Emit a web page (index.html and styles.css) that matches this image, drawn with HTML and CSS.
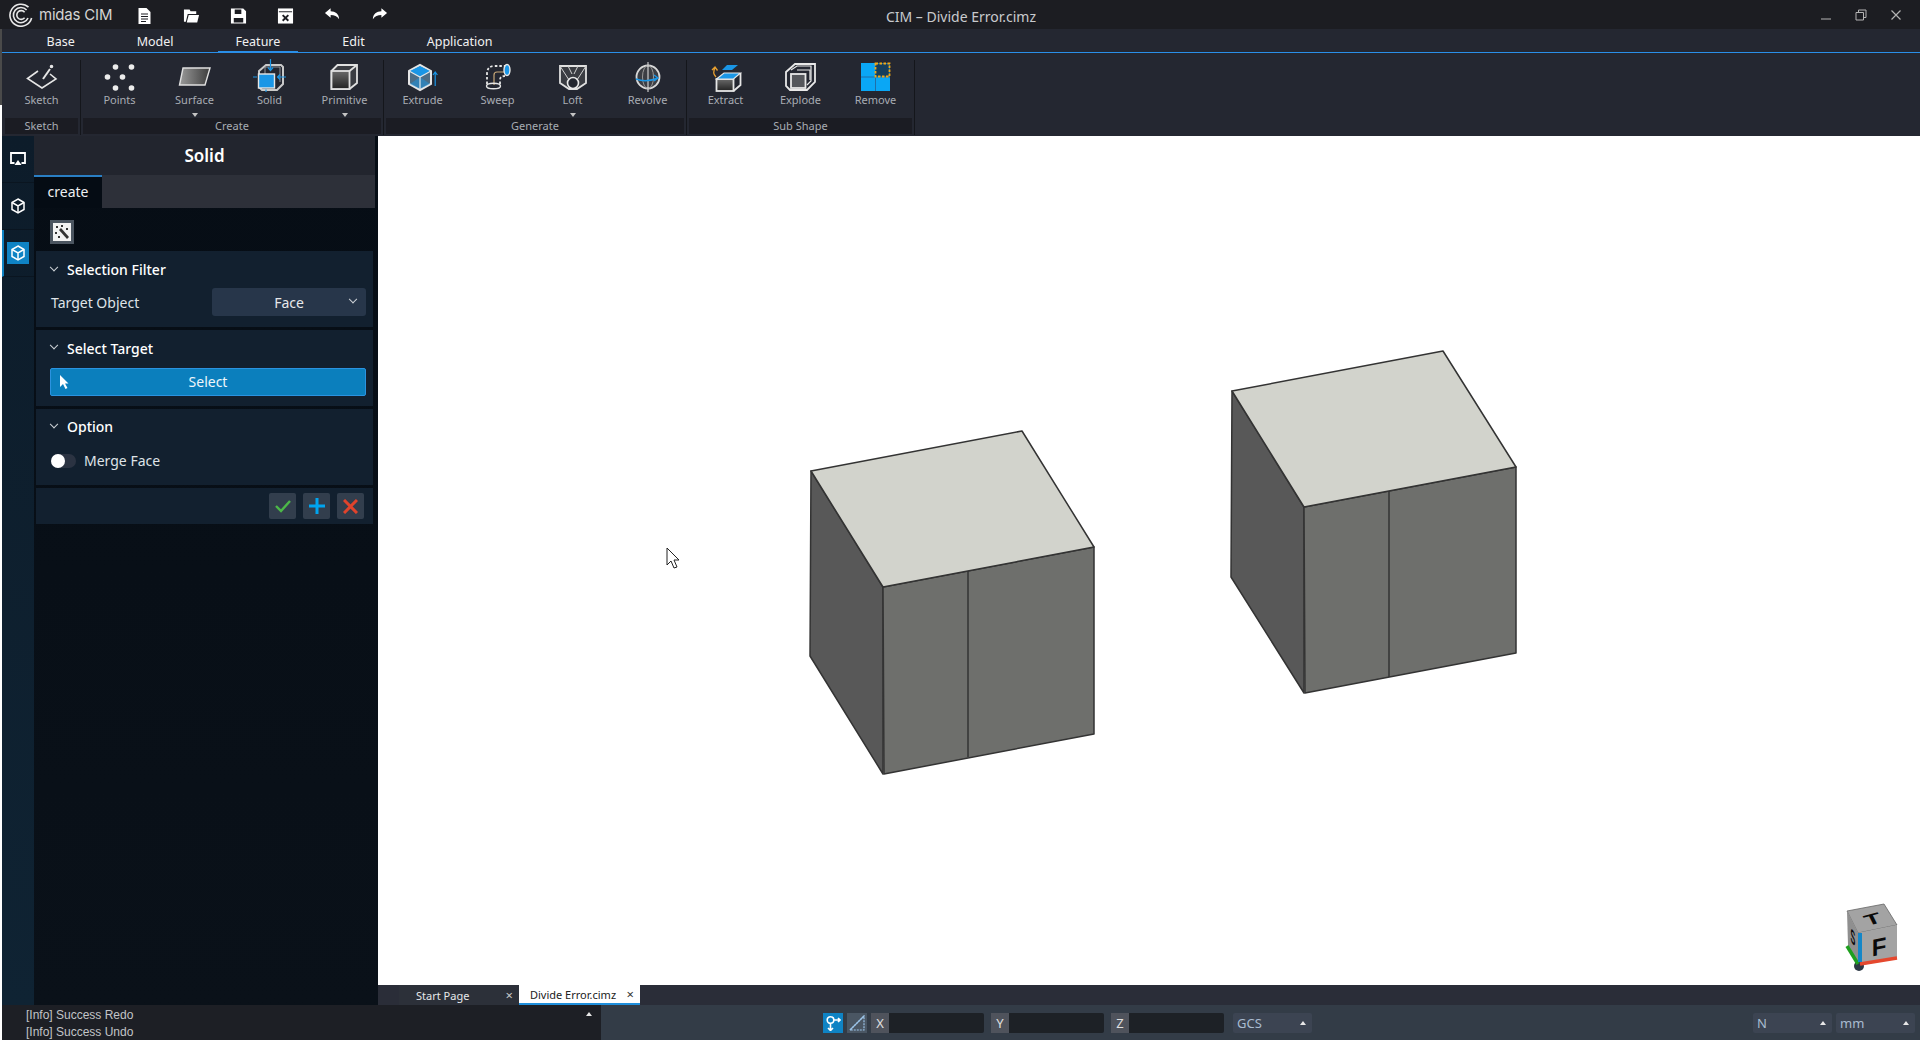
FILE: index.html
```html
<!DOCTYPE html>
<html lang="en">

<head>
    <meta charset="UTF-8">
    <title>CIM - Divide Error.cimz</title>
    <link rel="stylesheet" href="styles.css">
</head>

<body>
    <header class="titlebar">
        <div class="titlebar-left">
            <div class="logo">
                <svg width="24" height="24" viewBox="0 0 24 24" fill="none" stroke="#e8e8e8" stroke-width="1.6">
                    <path d="M19.5 4.2A11 11 0 1 0 22.6 15"/>
                    <path d="M17.6 7A7.6 7.6 0 1 0 19 15"/>
                    <path d="M15.6 9.2A4.4 4.4 0 1 0 15.6 14.8"/>
                </svg>
                <span>midas CIM</span>
            </div>
            <div class="quick-icons">
                <svg width="16" height="18" viewBox="0 0 16 18" fill="#fff"><path d="M2 1h8l4 4v12H2z"/><path d="M4.5 7h7M4.5 9.5h7M4.5 12h7M4.5 14.5h5" stroke="#1c1d22" stroke-width="1"/></svg>
                <svg width="18" height="18" viewBox="0 0 18 18" fill="#fff"><path d="M1 2h6l1 2h6v3H5L3 15H1z"/><path d="M6 8h11l-2 8H4z"/></svg>
                <svg width="18" height="18" viewBox="0 0 18 18" fill="#fff"><path d="M1 1h13l3 3v13H1z"/><path d="M5 2h7v5H5zM4 11h10v5H4z" fill="#1c1d22"/></svg>
                <svg width="18" height="18" viewBox="0 0 18 18"><path d="M1 1h16v16H1z" fill="#fff"/><path d="M2 4.500h14" stroke="#1c1d22" stroke-width="1"/><path d="M6 8l6 6M12 8l-6 6" stroke="#1c1d22" stroke-width="2"/></svg>
                <svg width="18" height="14" viewBox="0 0 18 14" fill="#fff"><path d="M7 1L1 6l6 5V8c4 0 7 1 9 4.500C16 7 12 4 7 4z"/></svg>
                <svg width="18" height="14" viewBox="0 0 18 14" fill="#fff"><path d="M11 1l6 5-6 5V8c-4 0-7 1-9 4.500C2 7 6 4 11 4z"/></svg>
            </div>
        </div>
        <div class="title-text">CIM &ndash; Divide Error.cimz</div>
        <div class="window-btns">
            <svg width="12" height="12" viewBox="0 0 12 12" stroke="#b4b4b4" fill="none"><path d="M1 10h10"/></svg>
            <svg width="12" height="12" viewBox="0 0 12 12" stroke="#b4b4b4" fill="none"><path d="M1 3.500h7.500v7.500H1zM3.500 3.500V1H11v7.500H8.500"/></svg>
            <svg width="12" height="12" viewBox="0 0 12 12" stroke="#b4b4b4" fill="none" stroke-width="1.200"><path d="M1.500 1.500l9 9M10.500 1.500l-9 9"/></svg>
        </div>
    </header>

    <div class="ribbon-wrap">
        <nav class="ribbon-tabs">
            <div class="ribbon-tab">Base</div>
            <div class="ribbon-tab">Model</div>
            <div class="ribbon-tab active">Feature</div>
            <div class="ribbon-tab">Edit</div>
            <div class="ribbon-tab">Application</div>
        </nav>
        <div class="ribbon">
            <section class="group">
                <div class="tools">
                    <div class="tool">
                        <svg width="32" height="30" viewBox="0 0 32 30" fill="none" stroke="#e6e6e6" stroke-width="1.600"><path d="M12 9L1.500 16.500 16 26l14-9-6-5"/><path d="M17 17l7-10" stroke-width="2"/><circle cx="25.500" cy="4.500" r="1" fill="#e6e6e6"/></svg>
                        <span>Sketch</span>
                    </div>
                </div>
                <div class="group-label">Sketch</div>
            </section>

            <section class="group">
                <div class="tools">
                    <div class="tool">
                        <svg width="32" height="30" viewBox="0 0 32 30" fill="#ececec"><circle cx="11.500" cy="5" r="2.800"/><circle cx="27.500" cy="5" r="2.800"/><circle cx="3.500" cy="15" r="2.800"/><circle cx="18.500" cy="15" r="2.800"/><circle cx="11.500" cy="26" r="2.800"/><circle cx="27.500" cy="26" r="2.800"/></svg>
                        <span>Points</span>
                    </div>
                    <div class="tool">
                        <svg width="32" height="30" viewBox="0 0 32 30"><defs><linearGradient id="surf" x1="0" x2="1"><stop offset="0" stop-color="#9a9a9a"/><stop offset="1" stop-color="#3c3c3c"/></linearGradient></defs><path d="M4 6h27l-5 17H0.500z" fill="url(#surf)" stroke="#e0e0e0" stroke-width="1.400"/></svg>
                        <span>Surface</span>
                        <i class="drop"></i>
                    </div>
                    <div class="tool">
                        <svg width="32" height="30" viewBox="0 0 32 30" fill="none"><path d="M5 9l7-6h15l2 2v17l-6 6H8l-3-3z" stroke="#c9c9c9" stroke-width="2"/><path d="M11 5v8M11 5h15v15" stroke="#8f9499" stroke-width="1"/><rect x="4.500" y="12" width="16" height="14" fill="#1a96e6" stroke="#e6e6e6" stroke-width="1.400"/><path d="M16.500 -3V8M14 5.500l2.500 3 2.500-3M-1 15H3M32 15H23.500M26 12.500L23.500 15l2.500 2.500M12 27.500V30" stroke="#1a96e6" stroke-width="1.200"/></svg>
                        <span>Solid</span>
                    </div>
                    <div class="tool">
                        <svg width="32" height="30" viewBox="0 0 32 30"><defs><linearGradient id="prim" x1="0" x2="0" y1="0" y2="1"><stop offset="0" stop-color="#6a6a6a"/><stop offset="1" stop-color="#222"/></linearGradient></defs><path d="M2.500 9L8.500 3H28v18l-7.500 6H2.500z" fill="#3a3c42" stroke="#e0e0e0" stroke-width="1.800"/><rect x="2.500" y="9" width="18" height="18" fill="url(#prim)" stroke="#e0e0e0" stroke-width="1.800"/><path d="M20.500 9L28 3" stroke="#e0e0e0" stroke-width="1.800"/></svg>
                        <span>Primitive</span>
                        <i class="drop"></i>
                    </div>
                </div>
                <div class="group-label">Create</div>
            </section>

            <section class="group">
                <div class="tools">
                    <div class="tool">
                        <svg width="32" height="30" viewBox="0 0 32 30" fill="none"><path d="M2 9l11-6 11 6v13l-11 6-11-6z" fill="#4d6d85" stroke="#e6e6e6" stroke-width="2"/><path d="M3 9l10-5 10 5-10 6z" fill="#1a96e6"/><path d="M3 22l10-7 10 7-10 5z" fill="#1a96e6" opacity=".5"/><path d="M2 9l11 6 11-6M13 15v13" stroke="#dfe6ea" stroke-width="1.200"/><path d="M28.200 24V10M26 13l2.200-3 2.200 3" stroke="#1a96e6" stroke-width="1.200"/></svg>
                        <span>Extrude</span>
                    </div>
                    <div class="tool">
                        <svg width="32" height="30" viewBox="0 0 32 30" fill="none"><path d="M5 22V12q0-8 8-8h10" stroke="#e6e6e6" stroke-width="1.800" stroke-dasharray="2.500 2"/><path d="M18 22v-4q0-4 5-4" stroke="#e6e6e6" stroke-width="1.800" stroke-dasharray="2.500 2"/><path d="M12 23V13q0-3 3-3h8" stroke="#c8a878" stroke-width="1.200"/><ellipse cx="11.500" cy="24" rx="7" ry="2.800" stroke="#e6e6e6" stroke-width="1.400"/><ellipse cx="25" cy="8" rx="3" ry="5.500" fill="#1a96e6" stroke="#e6e6e6" stroke-width="1.400"/></svg>
                        <span>Sweep</span>
                    </div>
                    <div class="tool">
                        <svg width="32" height="30" viewBox="0 0 32 30"><path d="M3 4h26v17l-9 6H12l-9-6z" fill="#3a3c42" stroke="#e0e0e0" stroke-width="1.800"/><path d="M3 4l9 14M29 4l-9 14M11 4l4 8M21 4l-4 8" stroke="#d0d0d0" stroke-width="1" fill="none"/><circle cx="16" cy="21" r="5.500" fill="#23262f" stroke="#e8e8e8" stroke-width="1.600"/></svg>
                        <span>Loft</span>
                        <i class="drop"></i>
                    </div>
                    <div class="tool">
                        <svg width="32" height="30" viewBox="0 0 32 30" fill="none"><circle cx="16" cy="15" r="11.500" fill="#3c3e44" stroke="#d8d8d8" stroke-width="1.800"/><ellipse cx="16" cy="15" rx="5.500" ry="11.500" stroke="#999" stroke-width="1"/><path d="M16 0v30" stroke="#e8e8e8" stroke-width="1"/><path d="M4 17q10 4 22-1M22 13l4 3-4 3" stroke="#1a96e6" stroke-width="1.400"/></svg>
                        <span>Revolve</span>
                    </div>
                </div>
                <div class="group-label">Generate</div>
            </section>

            <section class="group">
                <div class="tools">
                    <div class="tool">
                        <svg width="32" height="30" viewBox="0 0 32 30" fill="none"><defs><linearGradient id="extr" x1="0" x2="0" y1="0" y2="1"><stop offset="0" stop-color="#6a6a6a"/><stop offset="1" stop-color="#222"/></linearGradient></defs><path d="M12 8l5-5h11l-6 5z" fill="#1a96e6"/><rect x="6.500" y="17" width="17" height="12" fill="url(#extr)" stroke="#e6e6e6" stroke-width="1.800"/><path d="M6.500 17l7.500-6h16.500l-7 6z" fill="#1a96e6" stroke="#e6e6e6" stroke-width="1.200"/><path d="M30.500 11v12l-7 6" stroke="#e6e6e6" stroke-width="1.800"/><path d="M6 15q-4-4-1-9M2 8l3-3 2.500 3.500" stroke="#e8a030" stroke-width="1.300"/></svg>
                        <span>Extract</span>
                    </div>
                    <div class="tool">
                        <svg width="32" height="30" viewBox="0 0 32 30" fill="none" stroke="#e8e8e8" stroke-width="1.800"><path d="M1 10l9-8h20v18l-8 8H5l-4-4z"/><path d="M6 8l6-4h14v15l-4 4" stroke-width="1.200"/><path d="M12 8h13v10" stroke-width="1.200"/><rect x="6" y="12" width="14.500" height="14" fill="#55575c"/></svg>
                        <span>Explode</span>
                    </div>
                    <div class="tool">
                        <svg width="32" height="30" viewBox="0 0 32 30"><rect x="1" y="1" width="29" height="28" fill="#0aa7f5"/><path d="M15.500 1v28M1 15h29" stroke="#1f6fa8" stroke-width="1"/><rect x="15.500" y="1.500" width="14" height="13" fill="#163e5c" stroke="#f0a818" stroke-width="1.800" stroke-dasharray="2.500 1.500"/></svg>
                        <span>Remove</span>
                    </div>
                </div>
                <div class="group-label">Sub Shape</div>
            </section>
        </div>
    </div>

    <div class="main">
        <aside class="side">
            <div class="rail">
                <div class="rail-item">
                    <svg width="16" height="16" viewBox="0 0 16 16" fill="none"><path d="M4.500 12H1V2h14v10h-3.500" stroke="#fff" stroke-width="1.800"/><path d="M8 9l3.500 5h-7z" fill="#fff"/></svg>
                </div>
                <div class="rail-item">
                    <svg width="16" height="16" viewBox="0 0 16 16" fill="none" stroke="#fff" stroke-width="1.500"><path d="M8 1l6 3.500v7L8 15l-6-3.500v-7z"/><path d="M2 4.500L8 8l6-3.500M8 8v7"/></svg>
                </div>
                <div class="rail-item selected">
                    <div class="rail-icon">
                        <svg width="16" height="16" viewBox="0 0 16 16" fill="none" stroke="#fff" stroke-width="1.500"><path d="M8 1l6 3.500v7L8 15l-6-3.500v-7z"/><path d="M2 4.500L8 8l6-3.500M8 8v7"/></svg>
                    </div>
                </div>
            </div>

            <div class="panel">
                <div class="panel-title">Solid</div>
                <div class="panel-tabs">
                    <div class="panel-tab">create</div>
                </div>
                <div class="panel-tools">
                    <div class="wand">
                        <svg width="18" height="18" viewBox="0 0 18 18"><rect width="18" height="18" fill="#f2f2f2"/><path d="M6 7l8 9 2-2-8-9z" fill="#333"/><path d="M3 3h2v2H3zM8 2h2v2H8zM13 5h2v2h-2zM2 9h2v2H2zM5 13h2v2H5z" fill="#333"/></svg>
                    </div>
                </div>

                <section class="block">
                    <div class="block-head"><i class="chevron"></i>Selection Filter</div>
                    <div class="field">
                        <label>Target Object</label>
                        <div class="select">Face<i class="chevron"></i></div>
                    </div>
                </section>

                <section class="block block-target">
                    <div class="block-head"><i class="chevron"></i>Select Target</div>
                    <div class="select-btn">
                        <svg width="10" height="16" viewBox="0 0 10 16" fill="#fff"><path d="M1 1v12l3-3 2.500 5 2-1-2.500-4.500H9.500z"/></svg>
                        <span>Select</span>
                    </div>
                </section>

                <section class="block block-option">
                    <div class="block-head"><i class="chevron"></i>Option</div>
                    <div class="switch-row">
                        <div class="switch"></div>
                        <span>Merge Face</span>
                    </div>
                </section>

                <div class="actions">
                    <div class="action">
                        <svg width="16" height="14" viewBox="0 0 16 14" fill="none" stroke="#4cb848" stroke-width="2.400"><path d="M1 7l5 5 9-10"/></svg>
                    </div>
                    <div class="action">
                        <svg width="16" height="16" viewBox="0 0 16 16" fill="none" stroke="#00a4ef" stroke-width="3"><path d="M8 0v16M0 8h16"/></svg>
                    </div>
                    <div class="action">
                        <svg width="15" height="15" viewBox="0 0 15 15" fill="none" stroke="#e0432c" stroke-width="3"><path d="M1 1l13 13M14 1L1 14"/></svg>
                    </div>
                </div>
            </div>
        </aside>

        <div class="work">
            <div class="viewport">
                <svg class="scene" viewBox="378 136 1542 849" stroke="#333" stroke-width="1.500" stroke-linejoin="round">
                    <g>
                        <path d="M811 471L883 587V774L810 656z" fill="#585858"/>
                        <path d="M883 587L1094 547V734L884 774z" fill="#6e6f6c"/>
                        <path d="M811 471L1022 431 1094 547 883 587z" fill="#d2d3cc"/>
                        <path d="M968 571V757" fill="none"/>
                    </g>
                    <g>
                        <path d="M1232 391L1304 507V693L1231 577z" fill="#585858"/>
                        <path d="M1304 507L1516 467V653L1305 693z" fill="#6e6f6c"/>
                        <path d="M1232 391L1443 351 1516 467 1304 507z" fill="#d2d3cc"/>
                        <path d="M1389 491V677" fill="none"/>
                    </g>
                    <path d="M667 548v17l4-4 3 7 3-1-3-7h5z" fill="#fff" stroke="#222" stroke-width="1"/>
                    <g class="navcube" stroke="none">
                        <path d="M1847 911L1884 904 1897 925 1858 933z" fill="#a3a3a3" stroke="#666" stroke-width="0.800"/>
                        <path d="M1847 911L1858 933V966L1848 945z" fill="#8f8f8f"/>
                        <path d="M1858 933L1897 925V958L1858 966z" fill="#a3a3a3"/>
                        <circle cx="1859" cy="966" r="5" fill="#2d3845"/>
                        <path d="M1847 946L1858 964" stroke="#1fa01f" stroke-width="3.500"/>
                        <path d="M1860 964L1897 958" stroke="#e5482e" stroke-width="3.500"/>
                        <path d="M1860 933V962" stroke="#1487c8" stroke-width="4"/>
                        <text class="cube-letter" transform="translate(1879 955) skewY(-11)" text-anchor="middle">F</text>
                        <text class="cube-letter small" transform="matrix(1.500 -.4 .42 .83 1875 924)" text-anchor="middle">T</text>
                        <text class="cube-letter side" transform="matrix(.4 .5 0 1.100 1853 944)" text-anchor="middle">S</text>
                    </g>
                </svg>
            </div>
            <div class="doc-tabs">
                <div class="doc-tab">
                    <span>Start Page</span>
                    <b>&times;</b>
                </div>
                <div class="doc-tab current">
                    <span>Divide Error.cimz</span>
                    <b>&times;</b>
                </div>
            </div>
        </div>
    </div>

    <footer class="status">
        <div class="log">
            <p>[Info] Success Redo</p>
            <p>[Info] Success Undo</p>
            <i class="caret"></i>
        </div>
        <div class="status-tools">
            <div class="snap on">
                <svg width="16" height="16" viewBox="0 0 16 16" fill="none" stroke="#fff" stroke-width="1.600"><circle cx="5.500" cy="5" r="3.300"/><path d="M5.500 8.500V15M3 13l2.500 2.500L8 13M9 5h6M13 3l2 2-2 2"/></svg>
            </div>
            <div class="snap">
                <svg width="16" height="16" viewBox="0 0 16 16" fill="none" stroke="#9cc4e8" stroke-width="1.200"><path d="M1 15L15 1v14z" stroke-dasharray="2 1"/><path d="M1 15L15 1"/></svg>
            </div>
            <div class="coord"><span>X</span><div class="coord-input"></div></div>
            <div class="coord"><span>Y</span><div class="coord-input"></div></div>
            <div class="coord"><span>Z</span><div class="coord-input"></div></div>
            <div class="drop-box gcs">GCS<i class="caret"></i></div>
            <div class="drop-box unit-first">N<i class="caret"></i></div>
            <div class="drop-box">mm<i class="caret"></i></div>
        </div>
    </footer>
</body>

</html>
```

FILE: styles.css
```css
* {
    padding: 0;
    margin: 0;
    box-sizing: border-box;
}

html,
body {
    height: 1040px;
    overflow: hidden;
}

body {
    background-color: #fff;
    font-family: "Noto Sans", Roboto, sans-serif;
    font-size: 14px;
    color: #e6e8ea;
    display: flex;
    flex-direction: column;
}

svg {
    display: block;
}

/* title bar */
.titlebar {
    height: 29px;
    background-color: #1c1d22;
    display: grid;
    grid-template-columns: 1fr auto 1fr;
    align-items: center;
    flex-shrink: 0;
}

.titlebar-left {
    display: flex;
    align-items: center;
    padding-left: 9px;
}

.logo {
    display: flex;
    align-items: center;
    gap: 6px;
    width: 112px;
    font-family: Inter, sans-serif;
    font-size: 15px;
    color: #d4d4d4;
    letter-spacing: -0.2px;
}

.quick-icons {
    display: flex;
    margin-top: 2px;
}

.quick-icons svg {
    width: 47px;
    padding: 0 15px;
}

.title-text {
    margin: 4px 0 0 2px;
    color: #c9cbce;
}

.window-btns {
    display: flex;
    justify-content: flex-end;
    gap: 23px;
    padding-right: 18px;
}

/* ribbon */
.ribbon-wrap {
    height: 107px;
    background-color: #242731;
    border-left: 2px solid;
    border-image: linear-gradient(#4a4a4a 71%, #fff 71%) 1;
    flex-shrink: 0;
}

.ribbon-tabs {
    height: 24px;
    display: flex;
    gap: 27px;
    padding-left: 27px;
    border-bottom: 1px solid #2a8fe8;
}

.ribbon-tab {
    padding: 2px 17.5px 0;
    font-size: 12.5px;
    line-height: 21px;
    color: #f1f1f1;
}

.ribbon-tab.active {
    border-bottom: 1px solid #2a8fe8;
}

.ribbon {
    display: flex;
    padding-left: 2px;
    height: 83px;
}

.group {
    position: relative;
    display: flex;
    flex-direction: column;
}

.group::after {
    content: "";
    position: absolute;
    top: 7px;
    bottom: 1px;
    right: 1px;
    width: 1px;
    background-color: #14161b;
}

.tools {
    display: flex;
    height: 65px;
    padding-right: 3px;
}

.tool {
    position: relative;
    width: 75px;
    display: flex;
    flex-direction: column;
    align-items: center;
    padding-top: 9px;
    font-size: 11px;
    line-height: 15px;
    color: #a8acb3;
}

.tool svg {
    overflow: visible;
}

.drop {
    position: absolute;
    left: 35px;
    bottom: 1px;
    border-left: 3px solid transparent;
    border-right: 3px solid transparent;
    border-top: 4px solid #c4c4c4;
}

.group-label {
    height: 16px;
    margin: 0 4px 0 1px;
    background-color: #1b1c23;
    font-size: 11px;
    line-height: 16px;
    text-align: center;
    color: #a8acb3;
}

/* side panel */
.main {
    flex: 1;
    display: flex;
    min-height: 0;
}

.side {
    width: 376px;
    margin-left: 2px;
    display: flex;
    background-color: #0a1119;
    flex-shrink: 0;
}

.rail {
    width: 32px;
    background: linear-gradient(#0d1c2a, #0f2333);
    flex-shrink: 0;
}

.rail-item {
    height: 47px;
    padding-bottom: 1px;
    display: flex;
    align-items: center;
    justify-content: center;
    border-bottom: 1px solid #0a1520;
}

.rail-item.selected {
    border-left: 2px solid #0f83c4;
    padding-right: 2px;
}

.rail-icon {
    width: 22px;
    height: 22px;
    background-color: #0f83c4;
    display: flex;
    align-items: center;
    justify-content: center;
}

.panel {
    flex: 1;
    padding-right: 5px;
    background: linear-gradient(#060d15, #0a1119);
}

.panel-title {
    height: 39px;
    background-color: #22252e;
    margin-right: -2px;
    text-align: center;
    font-size: 17px;
    font-weight: 600;
    line-height: 40px;
    color: #fff;
}

.panel-tabs {
    height: 33px;
    background-color: #2d3039;
    margin-right: -2px;
}

.panel-tab {
    width: 68px;
    height: 33px;
    background-color: #050c14;
    border-top: 2px solid #2a7fc4;
    text-align: center;
    line-height: 30px;
    color: #eef0f2;
}

.panel-tools {
    height: 43px;
    padding: 12px 0 0 16px;
}

.wand {
    width: 24px;
    height: 24px;
    background-color: #4b5560;
    display: flex;
    align-items: center;
    justify-content: center;
}

.block {
    height: 76px;
    margin: 0 0 3px 2px;
    background-color: #12202f;
}

.block-head {
    height: 37px;
    display: flex;
    align-items: center;
    padding-left: 15px;
    gap: 10px;
    font-size: 14px;
    font-weight: 500;
    line-height: 37px;
    color: #fff;
}

.block-option .block-head {
    padding-bottom: 2px;
}

.chevron {
    width: 6px;
    height: 6px;
    border-right: 1px solid #cfd3d8;
    border-bottom: 1px solid #cfd3d8;
    transform: rotate(45deg) translate(-2px, -2px);
    flex-shrink: 0;
}

.field {
    display: flex;
    align-items: center;
    justify-content: space-between;
    padding: 0 7px 0 15px;
}

.field label {
    color: #dfe3e7;
}

.select {
    position: relative;
    width: 154px;
    height: 28px;
    background-color: #27364a;
    border-radius: 3px;
    text-align: center;
    line-height: 30px;
    color: #e6e8ea;
}

.select .chevron {
    position: absolute;
    right: 10px;
    top: 11px;
}

.block-target .block-head {
    height: 38px;
    padding-bottom: 2px;
}

.select-btn {
    position: relative;
    height: 28px;
    margin: 0 7px 0 14px;
    background-color: #0b7fbd;
    border: 1px solid #2b93e0;
    border-radius: 2px;
    text-align: center;
    line-height: 26px;
    color: #eef6fb;
}

.select-btn svg {
    position: absolute;
    left: 8px;
    top: 5px;
}

.switch-row {
    display: flex;
    align-items: center;
    gap: 8px;
    padding: 5px 0 0 15px;
    color: #dfe3e7;
}

.switch {
    width: 25px;
    height: 14px;
    background-color: #2b3342;
    border-radius: 7px;
    position: relative;
}

.switch::before {
    content: "";
    position: absolute;
    left: 0;
    top: 0;
    width: 14px;
    height: 14px;
    background-color: #fff;
    border-radius: 50%;
}

.actions {
    height: 36px;
    margin-left: 2px;
    background-color: #12202f;
    display: flex;
    justify-content: flex-end;
    align-items: center;
    gap: 7px;
    padding-right: 9px;
}

.action {
    width: 27px;
    height: 26px;
    background-color: #323e4d;
    border-radius: 2px;
    display: flex;
    align-items: center;
    justify-content: center;
}

/* viewport */
.work {
    flex: 1;
    display: flex;
    flex-direction: column;
    min-width: 0;
}

.viewport {
    flex: 1;
    background-color: #fff;
    min-height: 0;
}

.scene {
    width: 1542px;
    height: 849px;
}

.cube-letter {
    font-family: "Liberation Sans", sans-serif;
    font-weight: 700;
    font-size: 24px;
    fill: #0a0a0a;
}

.cube-letter.small {
    font-size: 17px;
}

.cube-letter.side {
    font-size: 18px;
}

.doc-tabs {
    height: 20px;
    background-color: #2a2d38;
    display: flex;
    padding-left: 21px;
    flex-shrink: 0;
}

.doc-tab {
    display: flex;
    align-items: center;
    justify-content: space-between;
    width: 120px;
    padding: 0 6px 0 17px;
    background-color: #2c3039;
    font-size: 11px;
    color: #e6e8ea;
}

.doc-tab b {
    font-weight: 400;
    font-size: 13px;
    color: #c8c8c8;
}

.doc-tab.current {
    width: 121px;
    padding: 0 6px 0 11px;
    background-color: #fff;
    border-bottom: 2px solid #1f8fdc;
    color: #222;
}

.doc-tab.current b {
    color: #333;
}

/* status bar */
.status {
    height: 35px;
    margin-left: 2px;
    display: flex;
    background-color: #333c47;
    flex-shrink: 0;
}

.log {
    position: relative;
    width: 599px;
    background-color: #1d1f25;
    padding: 2px 0 0 24px;
    font-family: "Liberation Sans", sans-serif;
    font-size: 12px;
    line-height: 17px;
    color: #c2c4c7;
    flex-shrink: 0;
}

.caret {
    border-left: 3px solid transparent;
    border-right: 3px solid transparent;
    border-bottom: 4px solid #e8e8e8;
}

.log .caret {
    position: absolute;
    left: 584px;
    top: 7px;
}

.status-tools {
    flex: 1;
    display: flex;
    align-items: center;
    padding: 0 5px 0 222px;
    gap: 4px;
}

.snap {
    width: 20px;
    height: 20px;
    background-color: #4a5663;
    display: flex;
    align-items: center;
    justify-content: center;
}

.snap.on {
    background-color: #0f83c4;
}

.coord {
    display: flex;
    width: 113px;
    height: 20px;
    margin-right: 3px;
}

.coord span {
    width: 18px;
    background-color: #4f535c;
    font-size: 13px;
    text-align: center;
    line-height: 20px;
    color: #e0e0e0;
}

.coord-input {
    flex: 1;
    background-color: #1d2126;
    border-radius: 0 2px 2px 0;
}

.drop-box {
    display: flex;
    align-items: center;
    justify-content: space-between;
    width: 79px;
    height: 20px;
    padding: 0 6px 0 4px;
    background-color: #3c4452;
    border-radius: 2px;
    font-size: 13px;
    color: #a9bcd0;
}

.gcs {
    margin-left: 2px;
}

.unit-first {
    margin-left: auto;
}
```
